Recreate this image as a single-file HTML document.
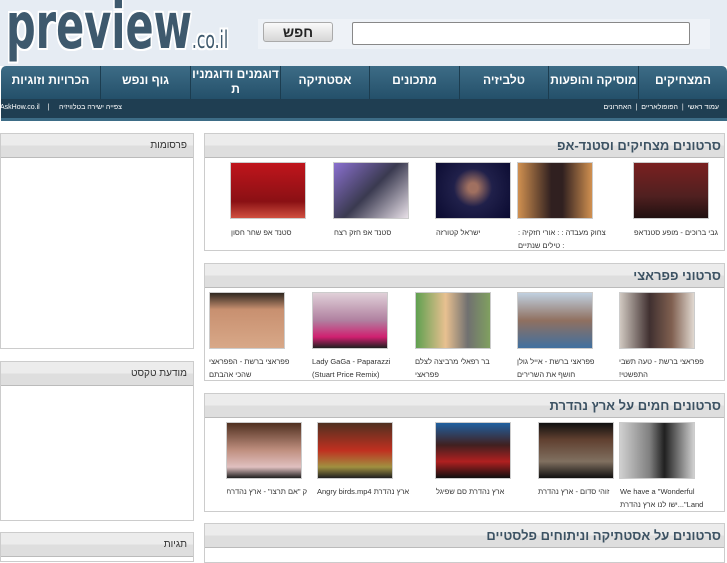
<!DOCTYPE html>
<html><head><meta charset="utf-8"><style>
*{margin:0;padding:0;box-sizing:border-box}
body{width:727px;height:545px;overflow:hidden;background:#fff;font-family:"Liberation Sans","Noto Sans CJK SC",sans-serif;position:relative}
.a{position:absolute}
#hdr{left:0;top:0;width:727px;height:66px;background:#e6ecf3}
.logo{left:6px;top:-10px;font-size:64px;font-weight:bold;color:#3e596d;font-family:"DejaVu Sans Condensed","Liberation Sans",sans-serif;transform:scaleX(0.72);transform-origin:0 0;white-space:nowrap;z-index:5;text-shadow:-2px -2px 0 #fff,2px -2px 0 #fff,-2px 2px 0 #fff,2px 2px 0 #fff,0 2px 0 #fff,0 -2px 0 #fff,2px 0 0 #fff,-2px 0 0 #fff}
.logo small{font-size:24px;font-weight:normal}
.btn{left:263px;top:22px;width:70px;height:20px;background:linear-gradient(#fafafa,#d6d6d6);border:1px solid #aaa;border-radius:3px;font-weight:bold;font-size:14px;text-align:center;line-height:18px;color:#222}
.inp{left:352px;top:22px;width:338px;height:23px;background:#fff;border:1px solid #888;border-radius:2px}
#nav{left:1px;top:66px;width:726px;height:33px;background:linear-gradient(#3d6c86,#24506a);border-radius:5px 5px 0 0}
#sub{left:1px;top:99px;width:726px;height:19px;background:#1f3e52}
#sub2{left:1px;top:118px;width:726px;height:3px;background:#3d6c86}
.ni{top:66px;height:33px;color:#fff;font-weight:bold;font-size:12px;text-align:center;border-left:1px solid #1c3d50;direction:rtl;line-height:28px;white-space:nowrap}
.st{top:104px;color:#fff;font-size:7px;direction:rtl;white-space:nowrap}
.lb{left:0;width:194px;border:1px solid #ccc;background:#fff}
.bh{height:24px;background:linear-gradient(#ececec 0,#ececec 50%,#dedede 50%,#dedede);border-bottom:1px solid #bbb;direction:rtl;text-align:right;padding-right:6px;font-size:10px;line-height:24px;color:#333}
.rb{left:204px;width:521px;border:1px solid #ccc;background:#fff}
.rb .bh{font-size:13px;font-weight:bold;color:#3c5263;padding-right:3px}
.t{width:76px;height:57px;border:1px solid #ccc}
.c{width:90px;font-size:7.5px;line-height:13px;color:#333;direction:rtl;text-align:left}
</style></head><body>
<div id="hdr" class="a"></div>
<div class="a" style="left:258px;width:452px;top:19px;height:30px;background:#eef2f7"></div>
<div class="a logo">preview<small>.co.il</small></div>
<div class="a btn">חפש</div>
<div class="a inp"></div>
<div id="nav" class="a"></div>
<div id="sub" class="a"></div>
<div id="sub2" class="a"></div>
<div class="a ni" style="left:638px;width:89px">המצחיקים</div>
<div class="a ni" style="left:548px;width:90px">מוסיקה והופעות</div>
<div class="a ni" style="left:459px;width:89px">טלביזיה</div>
<div class="a ni" style="left:369px;width:90px">מתכונים</div>
<div class="a ni" style="left:280px;width:89px">אסטתיקה</div>
<div class="a ni" style="left:190px;width:90px;line-height:15px;padding-top:1px">דוגמנים ודוגמניו<br>ת</div>
<div class="a ni" style="left:100px;width:90px">גוף ונפש</div>
<div class="a ni" style="left:1px;width:99px;border-left:0">הכרויות וזוגיות</div>
<div class="a st" style="right:8px">עמוד ראשי &nbsp;|&nbsp; הפופולאריים &nbsp;|&nbsp; האחרונים</div>
<div class="a st" style="left:0">צפייה ישירה בטלוויזיה &nbsp;&nbsp;&nbsp; | &nbsp;&nbsp; AskHow.co.il</div>

<div class="a lb" style="top:133px;height:216px"><div class="bh">פרסומות</div></div>
<div class="a lb" style="top:361px;height:160px"><div class="bh">מודעת טקסט</div></div>
<div class="a lb" style="top:532px;height:30px"><div class="bh">תגיות</div></div>

<div class="a rb" style="top:133px;height:118px"><div class="bh">סרטונים מצחיקים וסטנד-אפ</div></div>
<div class="a rb" style="top:263px;height:118px"><div class="bh">סרטוני פפראצי</div></div>
<div class="a rb" style="top:393px;height:119px"><div class="bh">סרטונים חמים על ארץ נהדרת</div></div>
<div class="a rb" style="top:523px;height:40px"><div class="bh">סרטונים על אסטתיקה וניתוחים פלסטיים</div></div>

<div class="a t" style="left:230px;top:162px;background:linear-gradient(#c0151c,#8a1014 70%,#d05040)"></div>
<div class="a t" style="left:333px;top:162px;background:linear-gradient(135deg,#8a70d0,#3a3a50 50%,#e8e0e8)"></div>
<div class="a t" style="left:435px;top:162px;background:radial-gradient(circle at 50% 45%,#a07060 10%,#20204a 40%,#0a0a30)"></div>
<div class="a t" style="left:517px;top:162px;background:linear-gradient(90deg,#d09050,#302020 45%,#302020 60%,#d09050)"></div>
<div class="a t" style="left:633px;top:162px;background:linear-gradient(#7a2020,#502020 60%,#201010)"></div>
<div class="a c" style="left:231px;top:226px">סטנד אפ שחר חסון</div>
<div class="a c" style="left:334px;top:226px">סטנד אפ חזק רצח</div>
<div class="a c" style="left:436px;top:226px">ישראל קטורזה</div>
<div class="a c" style="left:518px;top:226px">צחוק מעבדה : : אורי חזקיה : : טילים שנתיים</div>
<div class="a c" style="left:634px;top:226px;width:90px">גבי ברוכים - מופע סטנדאפ</div>

<div class="a t" style="left:209px;top:292px;background:linear-gradient(#302820,#c89070 30%,#d8a888)"></div>
<div class="a t" style="left:312px;top:292px;background:linear-gradient(#e0d0d8,#b080a0 50%,#d02070 80%,#202020)"></div>
<div class="a t" style="left:415px;top:292px;background:linear-gradient(90deg,#60a050,#e8c090 40%,#707070 70%,#80a060)"></div>
<div class="a t" style="left:517px;top:292px;background:linear-gradient(#c0d0e0,#907060 50%,#4070a0)"></div>
<div class="a t" style="left:619px;top:292px;background:linear-gradient(90deg,#d0c8c0,#403030 40%,#806050 70%,#e0d8d0)"></div>
<div class="a c" style="left:209px;top:355px">פפראצי ברשת - הפפראצי שהכי אהבתם</div>
<div class="a c" style="left:312px;top:355px">Lady GaGa - Paparazzi (Stuart Price Remix)</div>
<div class="a c" style="left:415px;top:355px">בר רפאלי מרביצה לצלם פפראצי</div>
<div class="a c" style="left:517px;top:355px">פפראצי ברשת - אייל גולן חושף את השרירים</div>
<div class="a c" style="left:619px;top:355px">פפראצי ברשת - טעה תשבי התפשטי!</div>

<div class="a t" style="left:226px;top:422px;background:linear-gradient(#503020,#c09080 50%,#e0c0c0 80%,#202020)"></div>
<div class="a t" style="left:317px;top:422px;background:linear-gradient(#503020,#c03020 50%,#a09040 80%,#202020)"></div>
<div class="a t" style="left:435px;top:422px;background:linear-gradient(#2060a0,#402020 40%,#b02020 70%,#101010)"></div>
<div class="a t" style="left:538px;top:422px;background:linear-gradient(#101010,#604030 30%,#807060 70%,#101010)"></div>
<div class="a t" style="left:619px;top:422px;background:linear-gradient(90deg,#d0d0d0,#808080 40%,#202020 60%,#d0d0d0)"></div>
<div class="a c" style="left:227px;top:485px;white-space:nowrap;width:80px;overflow:hidden">ק "אם תרצו" - ארץ נהדרת</div>
<div class="a c" style="left:317px;top:485px;white-space:nowrap;width:93px;overflow:hidden">ארץ נהדרת Angry birds.mp4</div>
<div class="a c" style="left:436px;top:485px">ארץ נהדרת סם שפיגל</div>
<div class="a c" style="left:538px;top:485px">זוהי סדום - ארץ נהדרת</div>
<div class="a c" style="left:620px;top:485px">We have a "Wonderful Land"...ישו לנו ארץ נהדרת</div>
</body></html>
